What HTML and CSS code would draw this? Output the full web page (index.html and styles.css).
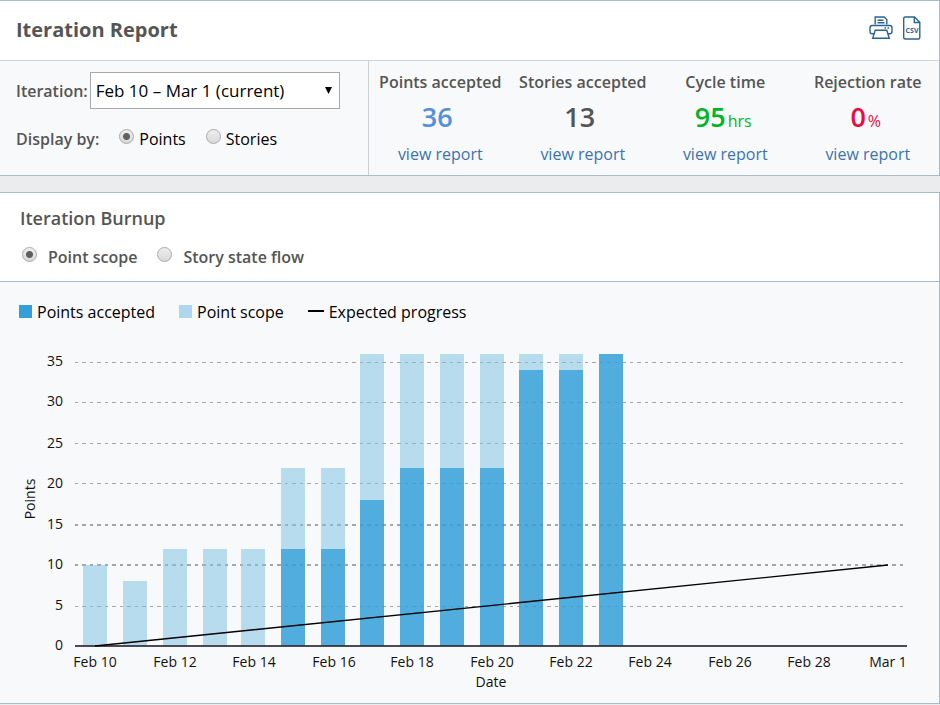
FILE: index.html
```html
<!DOCTYPE html>
<html lang="en">
<head>
<meta charset="utf-8">
<title>Iteration Report</title>
<link rel="stylesheet" href="styles.css">
</head>
<body>
<section class="card">
  <header class="card-header">
    <h1>Iteration Report</h1>
    <div class="actions">
      <button type="button" aria-label="Print">
        <svg width="24" height="24" viewBox="0 0 24 24" fill="none" stroke="#2a6496" stroke-width="1.4">
          <path d="M6.2 8.5V1h9l2.6 2.6V8.5"/>
          <path d="M8.5 4.3h6M8.5 6.8h7"/>
          <path d="M5.2 17.8H3.2Q1 17.8 1 15.6V11.7Q1 9.5 3.2 9.5H20.8Q23 9.5 23 11.7V15.6Q23 17.8 20.8 17.8H18.8"/>
          <path d="M6.2 14.3H17.8L20.3 22.3H3.7Z"/>
          <path d="M15.500 12h1.500M18.500 12h1.500"/>
        </svg>
      </button>
      <button type="button" aria-label="Export CSV">
        <svg width="20" height="24" viewBox="0 0 20 24" fill="none" stroke="#2a6496" stroke-width="1.4">
          <path d="M1.7 2.5Q1.7 1 3.2 1H12.5L17.8 6.3V21.500Q17.800 23 16.300 23H3.200Q1.700 23 1.700 21.500ZM12.300 1V6.500H17.800"/>
          <text class="csv" x="10" y="17" text-anchor="middle">CSV</text>
        </svg>
      </button>
    </div>
  </header>
  <div class="summary">
    <form class="filters">
      <div class="filter-row">
        <label class="label" for="iteration">Iteration:</label>
        <span class="select">
          <select id="iteration"><option>Feb 10 – Mar 1 (current)</option></select>
          <svg width="7" height="7" viewBox="0 0 7 7"><path d="M0 0H7L3.500 7Z"/></svg>
        </span>
      </div>
      <div class="filter-row display-row" role="radiogroup" aria-labelledby="display-by">
        <span class="label" id="display-by">Display by:</span>
        <label class="option"><input type="radio" name="display" checked>Points</label>
        <label class="option"><input type="radio" name="display">Stories</label>
      </div>
    </form>
    <div class="stats">
      <div class="stat"><h2>Points accepted</h2><p class="value blue"><strong>36</strong><span></span></p><a href="#points">view report</a></div>
      <div class="stat"><h2>Stories accepted</h2><p class="value"><strong>13</strong><span></span></p><a href="#stories">view report</a></div>
      <div class="stat"><h2>Cycle time</h2><p class="value green"><strong>95</strong><span>hrs</span></p><a href="#cycle">view report</a></div>
      <div class="stat"><h2>Rejection rate</h2><p class="value red"><strong>0</strong><span>%</span></p><a href="#rejection">view report</a></div>
    </div>
  </div>
</section>
<section class="card">
  <header class="burnup-header">
    <h2>Iteration Burnup</h2>
    <div class="modes">
      <label><input type="radio" name="mode" checked>Point scope</label>
      <label><input type="radio" name="mode">Story state flow</label>
    </div>
  </header>
  <div class="chart">
    <ul class="legend">
      <li><i class="swatch accepted"></i>Points accepted</li>
      <li><i class="swatch scope"></i>Point scope</li>
      <li><i class="dash"></i>Expected progress</li>
    </ul>
    <svg class="plot" viewBox="0 330 939 373" role="img" aria-label="Iteration burnup chart">
      <g class="grid">
        <path d="M75 362.500H903M75 402.500H903M75 443.500H903M75 483.500H903M75 606.500H903"/>
        <path class="thick" d="M75 525H903M75 565H903"/>
      </g>
      <g class="bar-scope">
        <path d="M83 565h24v81h-24zM123 581h24v65h-24zM163 549h24v97h-24zM203 549h24v97h-24zM241 549h24v97h-24z"/>
        <path d="M281 468h24v81h-24zM321 468h24v81h-24zM360 354h24v146h-24zM400 354h24v114h-24zM440 354h24v114h-24zM480 354h24v114h-24zM519 354h24v16h-24zM559 354h24v16h-24z"/>
      </g>
      <path class="bar-accepted" d="M281 549h24v97h-24zM321 549h24v97h-24zM360 500h24v146h-24zM400 468h24v178h-24zM440 468h24v178h-24zM480 468h24v178h-24zM519 370h24v276h-24zM559 370h24v276h-24zM599 354h24v292h-24z"/>
      <path class="axis" d="M75 646H907"/>
      <path class="expected" d="M95 646L888 565"/>
      <g text-anchor="end">
        <text x="63" y="366">35</text>
        <text x="63" y="406">30</text>
        <text x="63" y="448">25</text>
        <text x="63" y="488">20</text>
        <text x="63" y="529">15</text>
        <text x="63" y="569">10</text>
        <text x="63" y="610">5</text>
        <text x="63" y="650">0</text>
      </g>
      <g text-anchor="middle">
        <text x="95" y="667">Feb 10</text>
        <text x="175" y="667">Feb 12</text>
        <text x="254" y="667">Feb 14</text>
        <text x="334" y="667">Feb 16</text>
        <text x="412" y="667">Feb 18</text>
        <text x="492" y="667">Feb 20</text>
        <text x="571" y="667">Feb 22</text>
        <text x="650" y="667">Feb 24</text>
        <text x="730" y="667">Feb 26</text>
        <text x="809" y="667">Feb 28</text>
        <text x="888" y="667">Mar 1</text>
        <text x="491" y="687">Date</text>
        <text transform="translate(35 499) rotate(-90)">Points</text>
      </g>
    </svg>
  </div>
</section>
</body>
</html>
```
FILE: styles.css
```css
* { box-sizing: border-box; }
body {
  margin: 0;
  background: #ebecee;
  color: #000;
  font: 16px/22px "Open Sans", sans-serif;
}
h1, h2, p, ul { margin: 0; padding: 0; }
.card {
  margin-bottom: 16px;
  border: 1px solid #a9bccb;
  border-left: 0;
  background: #fff;
}
.card:last-child { margin-bottom: 0; }
.card-header {
  display: flex;
  justify-content: space-between;
  align-items: flex-start;
  height: 60px;
  padding: 15px 17px 0 16px;
  border-bottom: 1px solid #cbd5dc;
}
h1 { font-size: 20px; line-height: 28px; font-weight: 700; color: #555; }
.actions { display: flex; gap: 9px; }
.actions button {
  display: flex;
  padding: 0;
  border: 0;
  background: none;
}
.csv { font: 700 7px "Open Sans", sans-serif; fill: #2a6496; stroke: none; }
.summary { display: flex; background: #f8f9fb; }
.filters {
  flex: 0 0 auto;
  width: 369px;
  padding: 11px 15px 0 16px;
  border-right: 1px solid #cbd0d5;
}
.filter-row { display: flex; align-items: center; }
.label { color: #555; font-weight: 600; }
.select {
  position: relative;
  flex: 0 0 auto;
  width: 250px;
  margin-left: 2px;
}
.select svg { position: absolute; right: 8px; top: 15px; pointer-events: none; }
select {
  appearance: none;
  width: 100%;
  height: 37px;
  padding: 0 5px;
  border: 1px solid #a9a9a9;
  border-radius: 0;
  background: #fff;
  color: #000;
  font: inherit;
  font-size: 17px;
}
.display-row { gap: 20px; margin-top: 19px; }
.option { display: flex; gap: 5px; }
input[type="radio"] {
  appearance: none;
  flex: 0 0 auto;
  width: 15px;
  height: 15px;
  margin: 1px 0 0;
  border: 1px solid #aaa;
  border-radius: 50%;
  background: linear-gradient(#eee, #d9d9d9);
}
input[type="radio"]:checked {
  background: radial-gradient(circle, #606060 3px, transparent 4px), linear-gradient(#eee, #d9d9d9);
}
.stats { flex: 1; display: grid; grid-template-columns: repeat(4, 1fr); }
.stat { padding: 10px 0; text-align: center; white-space: nowrap; }
.stat h2 { font-size: 16px; line-height: 22px; font-weight: 600; color: #555; }
.value { margin: 8px 0 6px; line-height: 32px; color: #555; }
.value strong { font-size: 27px; font-weight: 600; }
.value span { display: inline-block; margin-left: 2px; padding-right: 4px; }
.value.blue { color: #5390db; }
.value.green { color: #00b627; }
.value.red { color: #f0083f; }
a { color: #3b73af; text-decoration: none; }
.burnup-header {
  height: 89px;
  padding: 13px 20px 0;
  border-bottom: 1px solid #a9bccb;
  color: #555;
}
.burnup-header h2 { font-size: 18px; line-height: 25px; font-weight: 600; }
.modes { display: flex; gap: 20px; margin-top: 15px; padding-left: 2px; font-weight: 600; }
.modes label { display: flex; gap: 11px; }
.chart { background: #f8f9fb; }
.legend {
  display: flex;
  height: 48px;
  padding: 19px 19px 0;
  list-style: none;
}
.legend li { display: flex; gap: 5px; margin-right: 24px; }
.swatch { width: 13px; height: 13px; margin-top: 4px; }
.accepted { background: #359fd9; }
.scope { background: #aed7ee; }
.dash { width: 16px; height: 2px; margin-top: 9px; background: #000; }
.plot { display: block; width: 100%; height: auto; }
.plot text { font: 14px "Open Sans", sans-serif; fill: #111; }
.grid path {
  fill: none;
  stroke: #a4a6a9;
  stroke-dasharray: 3 4 4 4;
  shape-rendering: crispEdges;
}
.grid .thick { stroke-width: 2px; }
.bar-scope, .bar-accepted { shape-rendering: crispEdges; }
.bar-scope { fill: #7dc3e2; fill-opacity: .53; }
.bar-accepted { fill: #309ed6; fill-opacity: .84; }
.axis { stroke: #302c38; stroke-width: 2px; shape-rendering: crispEdges; opacity: .85; }
.expected { stroke: #000; stroke-width: 1.4px; }
```
